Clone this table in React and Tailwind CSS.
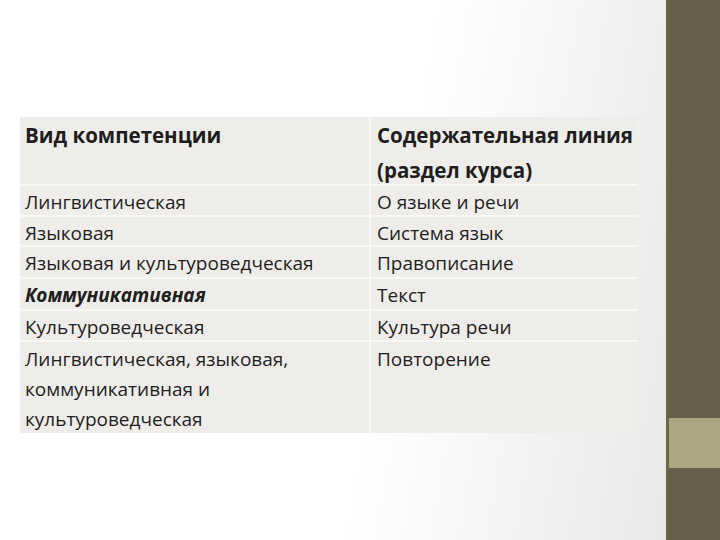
export default function App() {
  const font = { fontFamily: '"Open Sans", "Noto Sans", sans-serif' };
  const cell = "bg-[#eeede9] pl-[5px] text-[19px] leading-[30px] text-[#1e1e1e]";
  const rows = [
    ["Лингвистическая", "О языке и речи", "h-[29px]", false],
    ["Языковая", "Система язык", "h-[28px]", false],
    ["Языковая и культуроведческая", "Правописание", "h-[30px]", false],
    ["Коммуникативная", "Текст", "h-[30px]", true],
    ["Культуроведческая", "Культура речи", "h-[29px]", false],
  ];
  return (
    <div className="w-[720px] h-[540px] flex overflow-hidden" style={font}>
      <div className="flex-1 bg-[linear-gradient(100deg,#ffffff_58%,#e8e8e8_100%)] pt-[117px] pl-[20px]">
        <div className="w-[618px] bg-[#f8f8f6] grid grid-cols-[349px_267px] gap-x-[2px] gap-y-[2px]">
          <div className={`${cell} h-[67px] pt-[1px] font-bold text-[20.5px] leading-[35px]`}>Вид компетенции</div>
          <div className={`${cell} h-[67px] pt-[1px] pl-[6px] font-bold text-[20.5px] leading-[35px] whitespace-nowrap`}>
            Содержательная линия<br />(раздел курса)
          </div>
          {rows.map(([a, b, h, bold], i) => (
            <div key={i} className="contents">
              <div className={`${cell} ${h} pt-[1px] ${bold ? "font-bold italic text-[18.3px]" : ""}`}>{a}</div>
              <div className={`${cell} ${h} pt-[1px] pl-[6px]`}>{b}</div>
            </div>
          ))}
          <div className={`${cell} h-[91px] pt-[2px]`}>
            Лингвистическая, языковая,<br />коммуникативная и<br />культуроведческая
          </div>
          <div className={`${cell} h-[91px] pt-[2px] pl-[6px]`}>Повторение</div>
        </div>
      </div>
      <div className="w-[54px] h-full flex flex-col bg-[#655e4a] border-l-[3px] border-[#6d6543]">
        <div className="h-[418px]" />
        <div className="h-[50px] bg-[#aba781]" />
        <div className="flex-1" />
      </div>
    </div>
  );
}
